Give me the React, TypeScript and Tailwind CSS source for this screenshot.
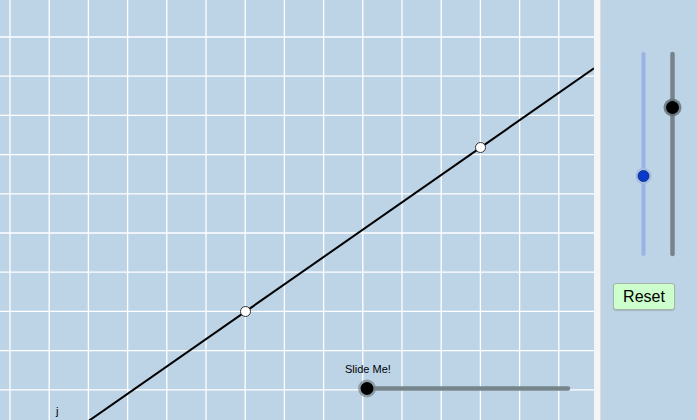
import React from 'react';

const W = 594;
const H = 420;
const STEP = 39.2;

const xs = Array.from({ length: 16 }, (_, i) => 10 + i * STEP).filter((x) => x < W);
const ys = Array.from({ length: 12 }, (_, i) => -2.2 + i * STEP).filter((y) => y > 0 && y < H);

// two points that define the line
const A = { x: 245.5, y: 311.5 };
const B = { x: 480.5, y: 147.5 };
const slope = (B.y - A.y) / (B.x - A.x);
const yAt = (x: number) => A.y + slope * (x - A.x);

const Graphics: React.FC = () => (
  <div className="relative w-[594px] h-[420px] shrink-0 bg-[#bdd3e6]">
    <svg width={W} height={H} className="absolute inset-0">
      {xs.map((x) => (
        <line key={`v${x}`} x1={x} y1={0} x2={x} y2={H} stroke="#fff" strokeWidth={1.3} />
      ))}
      {ys.map((y) => (
        <line key={`h${y}`} x1={0} y1={y} x2={W} y2={y} stroke="#fff" strokeWidth={1.3} />
      ))}
      <line x1={60} y1={yAt(60)} x2={W} y2={yAt(W)} stroke="#000" strokeWidth={2} />
      <circle cx={A.x} cy={A.y} r={5} fill="#fff" stroke="#333" strokeWidth={1} />
      <circle cx={B.x} cy={B.y} r={5} fill="#fff" stroke="#333" strokeWidth={1} />
      {/* slider on the canvas */}
      <line x1={367} y1={388.5} x2={568} y2={388.5} stroke="#76858c" strokeWidth={4.5} strokeLinecap="round" />
      <circle cx={367} cy={388.5} r={9} fill="#76858c" opacity={0.7} />
      <circle cx={367} cy={388.5} r={6.5} fill="#000" />
    </svg>
    <span className="absolute left-[345px] top-[364px] text-[11px] leading-none text-black font-['Liberation_Sans',Arial,sans-serif]">
      Slide Me!
    </span>
    <span className="absolute left-[56px] top-[406px] text-[11px] leading-none text-black font-['Liberation_Sans',Arial,sans-serif]">
      j
    </span>
  </div>
);

const SidePanel: React.FC = () => (
  <div className="flex-1 flex flex-col bg-[#bdd3e6]">
    <svg width={96} height={270}>
      {/* blue slider */}
      <line x1={42.5} y1={54} x2={42.5} y2={254} stroke="#99b4e2" strokeWidth={4} strokeLinecap="round" />
      <circle cx={42.5} cy={176} r={8} fill="#a4bde3" />
      <circle cx={42.5} cy={176} r={5.5} fill="#0a3acb" stroke="#102a70" strokeWidth={0.8} />
      {/* gray slider */}
      <line x1={71.5} y1={54} x2={71.5} y2={254} stroke="#76858c" strokeWidth={4.5} strokeLinecap="round" />
      <circle cx={71.5} cy={107.5} r={9} fill="#5f6d74" opacity={0.8} />
      <circle cx={71.5} cy={107.5} r={6.5} fill="#000" />
    </svg>
    <button className="ml-[12px] mt-[13px] w-[62px] h-[27px] rounded-[3px] border border-[#a6b5a6] bg-[#ccffcc] text-[16px] leading-none text-black font-['Liberation_Sans',Arial,sans-serif] shadow-[0_1px_1px_rgba(0,0,0,0.15)]">
      Reset
    </button>
  </div>
);

export default function App() {
  return (
    <div className="flex w-[697px] h-[420px] overflow-hidden">
      <Graphics />
      <div className="w-[7px] shrink-0 bg-[#f5f5f5] border-r border-[#dcdcdc]" />
      <SidePanel />
    </div>
  );
}
